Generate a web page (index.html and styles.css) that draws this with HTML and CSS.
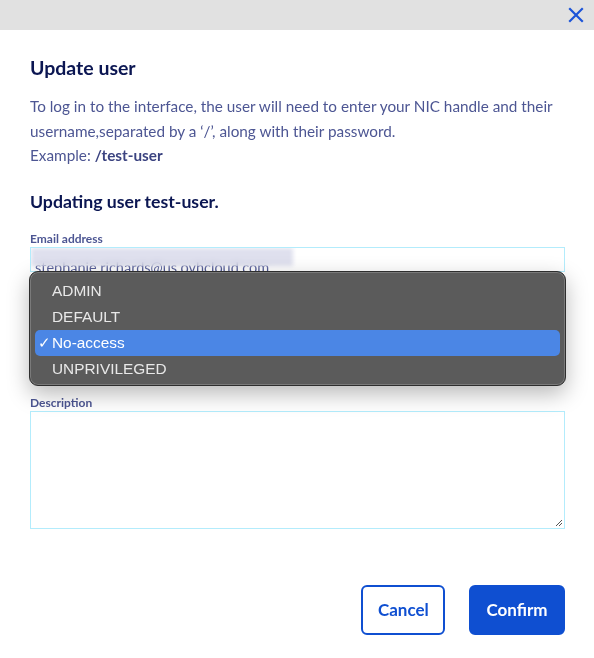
FILE: index.html
```html
<!DOCTYPE html>
<html lang="en">
<head>
<meta charset="utf-8">
<title>Update user</title>
<link rel="stylesheet" href="styles.css">
</head>
<body>
<div class="modal">
  <div class="topbar">
    <button class="close" aria-label="Close">
      <svg width="16" height="16" viewBox="0 0 16 16"><path d="M2 2 L14 14 M14 2 L2 14" stroke="#1c54d8" stroke-width="2.2" stroke-linecap="square" fill="none"/></svg>
    </button>
  </div>
  <div class="content">
    <h1 class="title">Update user</h1>
    <p class="intro">To log in to the interface, the user will need to enter your NIC handle and their username,separated by a ‘/’, along with their password.<br>Example: <strong>/test-user</strong></p>
    <h2 class="subtitle">Updating user test-user.</h2>
    <div class="form">
      <div class="field">
        <label class="label">Email address</label>
        <div class="input"><span class="value">stephanie.richards@us.ovhcloud.com</span><span class="blur"></span></div>
      </div>
      <div class="field role">
        <label class="label">Role</label>
        <div class="input select">No-access</div>
      </div>
      <div class="field">
        <label class="label">Description</label>
        <div class="textarea"><svg class="grip" width="8" height="8" viewBox="0 0 8 8"><path d="M7 1 L1 7 M7 4 L4 7" stroke="#555" stroke-width="1"/></svg></div>
      </div>
      <ul class="popup">
        <li class="opt">ADMIN</li>
        <li class="opt">DEFAULT</li>
        <li class="opt selected"><span class="check">✓</span>No-access</li>
        <li class="opt">UNPRIVILEGED</li>
      </ul>
    </div>
    <div class="actions">
      <button class="btn secondary">Cancel</button>
      <button class="btn primary">Confirm</button>
    </div>
  </div>
</div>
</body>
</html>
```
FILE: styles.css
```css
* { box-sizing: border-box; }
html, body { margin: 0; padding: 0; background: #fff; }
body { font-family: "Source Sans Pro", Lato, "Noto Sans", sans-serif; width: 594px; height: 658px; overflow: hidden; }
.modal { width: 594px; }
.topbar { height: 30px; background: #e1e1e1; display: flex; justify-content: flex-end; align-items: center; padding-right: 10px; }
.close { border: 0; background: none; padding: 0; width: 16px; height: 16px; display: flex; }
.content { padding: 0 29px 0 30px; }
.title { margin: 26px 0 0; font-size: 19.5px; font-weight: 700; color: #0b1652; line-height: 24px; }
.intro { margin: 14px 0 0; font-size: 15.3px; line-height: 24.5px; color: #4d5693; }
.intro strong { color: #3b4380; font-weight: 700; }
.subtitle { margin: 23px 0 0; font-size: 17.7px; font-weight: 700; color: #0b1652; line-height: 22px; }
.form { position: relative; margin-top: 19px; }
.field { display: flex; flex-direction: column; }
.label { font-size: 12px; font-weight: 700; color: #4d5693; line-height: 14px; height: 15px; }
.field + .field { margin-top: 14px; }
.field.role { margin-bottom: 70px; }
.input { position: relative; height: 25px; border: 1px solid #b3ecfc; padding: 0 4px; font-size: 14.5px; line-height: 39px; color: #4d5693; overflow: hidden; white-space: nowrap; }
.value { display: block; }
.blur { position: absolute; left: 0; top: 0; width: 262px; height: 18px; backdrop-filter: blur(3px); background: rgba(210,212,232,0.72); filter: blur(2px); }
.select { color: #4d5693; }
.textarea { position: relative; height: 118px; border: 1px solid #b3ecfc; }
.grip { position: absolute; right: 1px; bottom: 1px; }
.popup { position: absolute; left: -1px; top: 39px; width: 537px; height: 115px; margin: 0; padding: 6px 5px 5px; list-style: none; background: #5b5b5b; border: 1px solid #2e2e2e; border-radius: 9px; box-shadow: inset 0 0 0 1px #7a7a7a, 0 8px 22px rgba(0,0,0,0.28); font-family: "Liberation Sans", Arial, sans-serif; font-size: 15.4px; color: #e8e8e8; }
.opt { height: 26px; line-height: 26px; padding-left: 17px; position: relative; border-radius: 5px; }
.opt.selected { background: #4b86e5; color: #fff; }
.check { position: absolute; left: 3px; font-size: 15px; }
.actions { display: flex; justify-content: flex-end; gap: 24px; margin-top: 56px; }
.btn { height: 50px; border-radius: 6px; border: 2px solid #0f4fd1; font-family: inherit; font-size: 17px; font-weight: 700; padding: 0 15px; }
.secondary { background: #fff; color: #0f4fd1; width: 84px; }
.primary { background: #0f4fd1; color: #fff; width: 96px; }
```
